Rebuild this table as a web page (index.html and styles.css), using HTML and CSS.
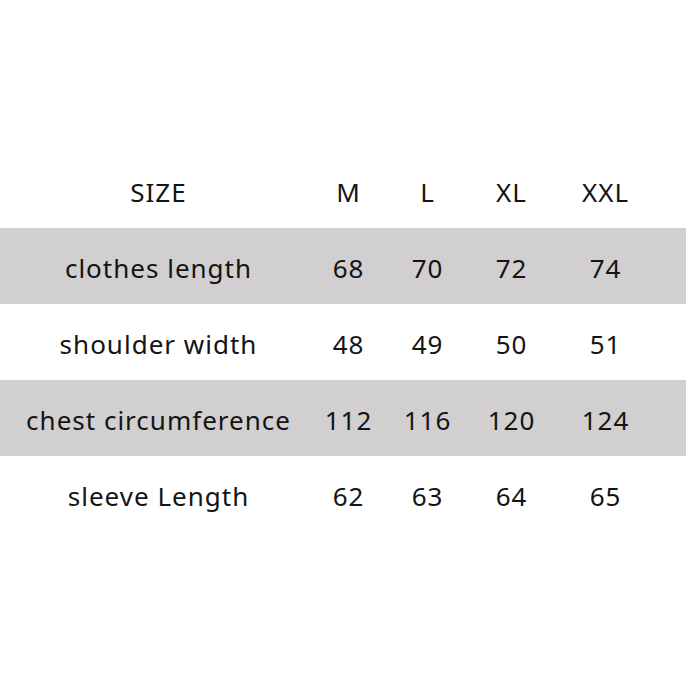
FILE: index.html
```html
<!DOCTYPE html>
<html>
<head>
<meta charset="utf-8">
<link rel="stylesheet" href="styles.css">
</head>
<body>
<div class="table">
  <div class="row">
    <div class="cell first">SIZE</div><div class="cell">M</div><div class="cell">L</div><div class="cell">XL</div><div class="cell">XXL</div>
  </div>
  <div class="row gray">
    <div class="cell first">clothes length</div><div class="cell">68</div><div class="cell">70</div><div class="cell">72</div><div class="cell">74</div>
  </div>
  <div class="row">
    <div class="cell first">shoulder width</div><div class="cell">48</div><div class="cell">49</div><div class="cell">50</div><div class="cell">51</div>
  </div>
  <div class="row gray">
    <div class="cell first">chest circumference</div><div class="cell">112</div><div class="cell">116</div><div class="cell">120</div><div class="cell">124</div>
  </div>
  <div class="row">
    <div class="cell first">sleeve Length</div><div class="cell">62</div><div class="cell">63</div><div class="cell">64</div><div class="cell">65</div>
  </div>
</div>
</body>
</html>
```
FILE: styles.css
```css
html, body {
  margin: 0;
  padding: 0;
  background: #ffffff;
}
body {
  width: 686px;
  height: 686px;
  font-family: "Noto Sans", "Open Sans", sans-serif;
  color: #141414;
}
.table {
  padding-top: 152px;
}
.row {
  display: grid;
  grid-template-columns: 316px 64px 94px 74px 114px 24px;
  height: 76px;
  align-items: start;
}
.row.gray {
  background: #d1cfd0;
}
.cell {
  text-align: center;
  font-size: 26px;
  letter-spacing: 1px;
  text-indent: 1px;
  padding-top: 4px;
  line-height: 72px;
  white-space: nowrap;
}
```
